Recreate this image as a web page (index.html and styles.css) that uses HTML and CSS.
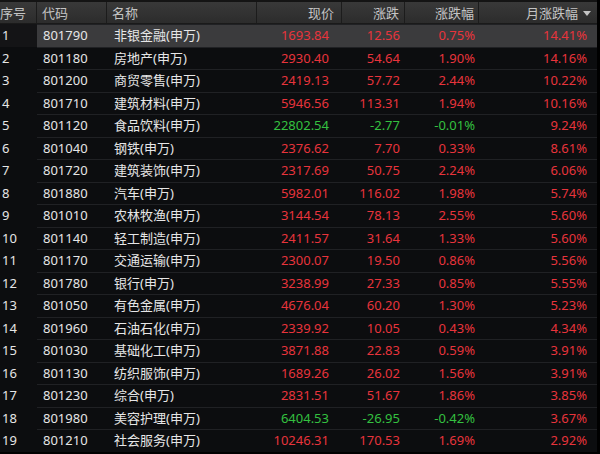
FILE: index.html
```html
<!DOCTYPE html>
<html lang="zh-CN">
<head>
<meta charset="utf-8">
<title>申万行业</title>
<link rel="stylesheet" href="styles.css">
</head>
<body>
<div class="board">
  <div class="row head">
    <div class="c c-no">序号</div>
    <div class="c c-code">代码</div>
    <div class="c c-name">名称</div>
    <div class="c c-price">现价</div>
    <div class="c c-chg">涨跌</div>
    <div class="c c-pct">涨跌幅</div>
    <div class="c c-month">月涨跌幅<span class="sort"></span></div>
  </div>
  <div class="row sel"><div class="c c-no">1</div><div class="c c-code">801790</div><div class="c c-name">非银金融(申万)</div><div class="c c-price up">1693.84</div><div class="c c-chg up">12.56</div><div class="c c-pct up">0.75%</div><div class="c c-month up">14.41%</div></div>
  <div class="row"><div class="c c-no">2</div><div class="c c-code">801180</div><div class="c c-name">房地产(申万)</div><div class="c c-price up">2930.40</div><div class="c c-chg up">54.64</div><div class="c c-pct up">1.90%</div><div class="c c-month up">14.16%</div></div>
  <div class="row"><div class="c c-no">3</div><div class="c c-code">801200</div><div class="c c-name">商贸零售(申万)</div><div class="c c-price up">2419.13</div><div class="c c-chg up">57.72</div><div class="c c-pct up">2.44%</div><div class="c c-month up">10.22%</div></div>
  <div class="row"><div class="c c-no">4</div><div class="c c-code">801710</div><div class="c c-name">建筑材料(申万)</div><div class="c c-price up">5946.56</div><div class="c c-chg up">113.31</div><div class="c c-pct up">1.94%</div><div class="c c-month up">10.16%</div></div>
  <div class="row"><div class="c c-no">5</div><div class="c c-code">801120</div><div class="c c-name">食品饮料(申万)</div><div class="c c-price down">22802.54</div><div class="c c-chg down">-2.77</div><div class="c c-pct down">-0.01%</div><div class="c c-month up">9.24%</div></div>
  <div class="row"><div class="c c-no">6</div><div class="c c-code">801040</div><div class="c c-name">钢铁(申万)</div><div class="c c-price up">2376.62</div><div class="c c-chg up">7.70</div><div class="c c-pct up">0.33%</div><div class="c c-month up">8.61%</div></div>
  <div class="row"><div class="c c-no">7</div><div class="c c-code">801720</div><div class="c c-name">建筑装饰(申万)</div><div class="c c-price up">2317.69</div><div class="c c-chg up">50.75</div><div class="c c-pct up">2.24%</div><div class="c c-month up">6.06%</div></div>
  <div class="row"><div class="c c-no">8</div><div class="c c-code">801880</div><div class="c c-name">汽车(申万)</div><div class="c c-price up">5982.01</div><div class="c c-chg up">116.02</div><div class="c c-pct up">1.98%</div><div class="c c-month up">5.74%</div></div>
  <div class="row"><div class="c c-no">9</div><div class="c c-code">801010</div><div class="c c-name">农林牧渔(申万)</div><div class="c c-price up">3144.54</div><div class="c c-chg up">78.13</div><div class="c c-pct up">2.55%</div><div class="c c-month up">5.60%</div></div>
  <div class="row"><div class="c c-no">10</div><div class="c c-code">801140</div><div class="c c-name">轻工制造(申万)</div><div class="c c-price up">2411.57</div><div class="c c-chg up">31.64</div><div class="c c-pct up">1.33%</div><div class="c c-month up">5.60%</div></div>
  <div class="row"><div class="c c-no">11</div><div class="c c-code">801170</div><div class="c c-name">交通运输(申万)</div><div class="c c-price up">2300.07</div><div class="c c-chg up">19.50</div><div class="c c-pct up">0.86%</div><div class="c c-month up">5.56%</div></div>
  <div class="row"><div class="c c-no">12</div><div class="c c-code">801780</div><div class="c c-name">银行(申万)</div><div class="c c-price up">3238.99</div><div class="c c-chg up">27.33</div><div class="c c-pct up">0.85%</div><div class="c c-month up">5.55%</div></div>
  <div class="row"><div class="c c-no">13</div><div class="c c-code">801050</div><div class="c c-name">有色金属(申万)</div><div class="c c-price up">4676.04</div><div class="c c-chg up">60.20</div><div class="c c-pct up">1.30%</div><div class="c c-month up">5.23%</div></div>
  <div class="row"><div class="c c-no">14</div><div class="c c-code">801960</div><div class="c c-name">石油石化(申万)</div><div class="c c-price up">2339.92</div><div class="c c-chg up">10.05</div><div class="c c-pct up">0.43%</div><div class="c c-month up">4.34%</div></div>
  <div class="row"><div class="c c-no">15</div><div class="c c-code">801030</div><div class="c c-name">基础化工(申万)</div><div class="c c-price up">3871.88</div><div class="c c-chg up">22.83</div><div class="c c-pct up">0.59%</div><div class="c c-month up">3.91%</div></div>
  <div class="row"><div class="c c-no">16</div><div class="c c-code">801130</div><div class="c c-name">纺织服饰(申万)</div><div class="c c-price up">1689.26</div><div class="c c-chg up">26.02</div><div class="c c-pct up">1.56%</div><div class="c c-month up">3.91%</div></div>
  <div class="row"><div class="c c-no">17</div><div class="c c-code">801230</div><div class="c c-name">综合(申万)</div><div class="c c-price up">2831.51</div><div class="c c-chg up">51.67</div><div class="c c-pct up">1.86%</div><div class="c c-month up">3.85%</div></div>
  <div class="row"><div class="c c-no">18</div><div class="c c-code">801980</div><div class="c c-name">美容护理(申万)</div><div class="c c-price down">6404.53</div><div class="c c-chg down">-26.95</div><div class="c c-pct down">-0.42%</div><div class="c c-month up">3.67%</div></div>
  <div class="row"><div class="c c-no">19</div><div class="c c-code">801210</div><div class="c c-name">社会服务(申万)</div><div class="c c-price up">10246.31</div><div class="c c-chg up">170.53</div><div class="c c-pct up">1.69%</div><div class="c c-month up">2.92%</div></div>
</div>
</body>
</html>
```

FILE: styles.css
```css
html, body {
  margin: 0;
  padding: 0;
  background: #000;
}
body {
  width: 600px;
  height: 454px;
  overflow: hidden;
  font-family: "Noto Sans", "Noto Sans CJK SC", sans-serif;
  font-size: 13px;
  color: #e6e6e6;
}
.board {
  width: 597px;
  background: #0c0d0f;
}
.row {
  display: grid;
  grid-template-columns: 37px 70px 150px 85px 63px 74px 118px;
  height: 22.5px;
}
.c {
  box-sizing: border-box;
  display: flex;
  align-items: center;
  white-space: nowrap;
  overflow: hidden;
  border-top: 1px solid #202124;
  line-height: 1;
}
.row .c-no {
  border-top-color: transparent;
  padding-left: 2px;
}
.c-code { padding-left: 6px; }
.c-name { padding-left: 7px; }
.c-price { justify-content: flex-end; padding-right: 13px; }
.c-chg { justify-content: flex-end; padding-right: 5px; }
.c-pct { justify-content: flex-end; padding-right: 4px; }
.c-month { justify-content: flex-end; padding-right: 10px; }

.head {
  height: 24px;
  background: linear-gradient(#393939, #2c2c2c);
  box-sizing: border-box;
  border-top: 2px solid #141414;
  border-bottom: 1px solid #1a1a1a;
}
.head .c {
  border-top: none;
  border-right: 1px solid #1c1c1c;
  color: #c4c4c4;
  padding-top: 1px;
}
.head .c-no { padding-left: 0; }
.head .c-code { padding-left: 5px; }
.head .c-name { padding-left: 5px; }
.head .c-price { padding-right: 7px; }
.head .c-month { border-right: none; padding-right: 6px; }
.sort {
  display: inline-block;
  width: 0;
  height: 0;
  margin-left: 5px;
  border-left: 4px solid transparent;
  border-right: 4px solid transparent;
  border-top: 5px solid #c4c4c4;
}
.sel .c { background: #3b3b3d; }
.sel .c-no { background: #141416; }

.up { color: #e8343c; }
.down { color: #34c040; }
```
